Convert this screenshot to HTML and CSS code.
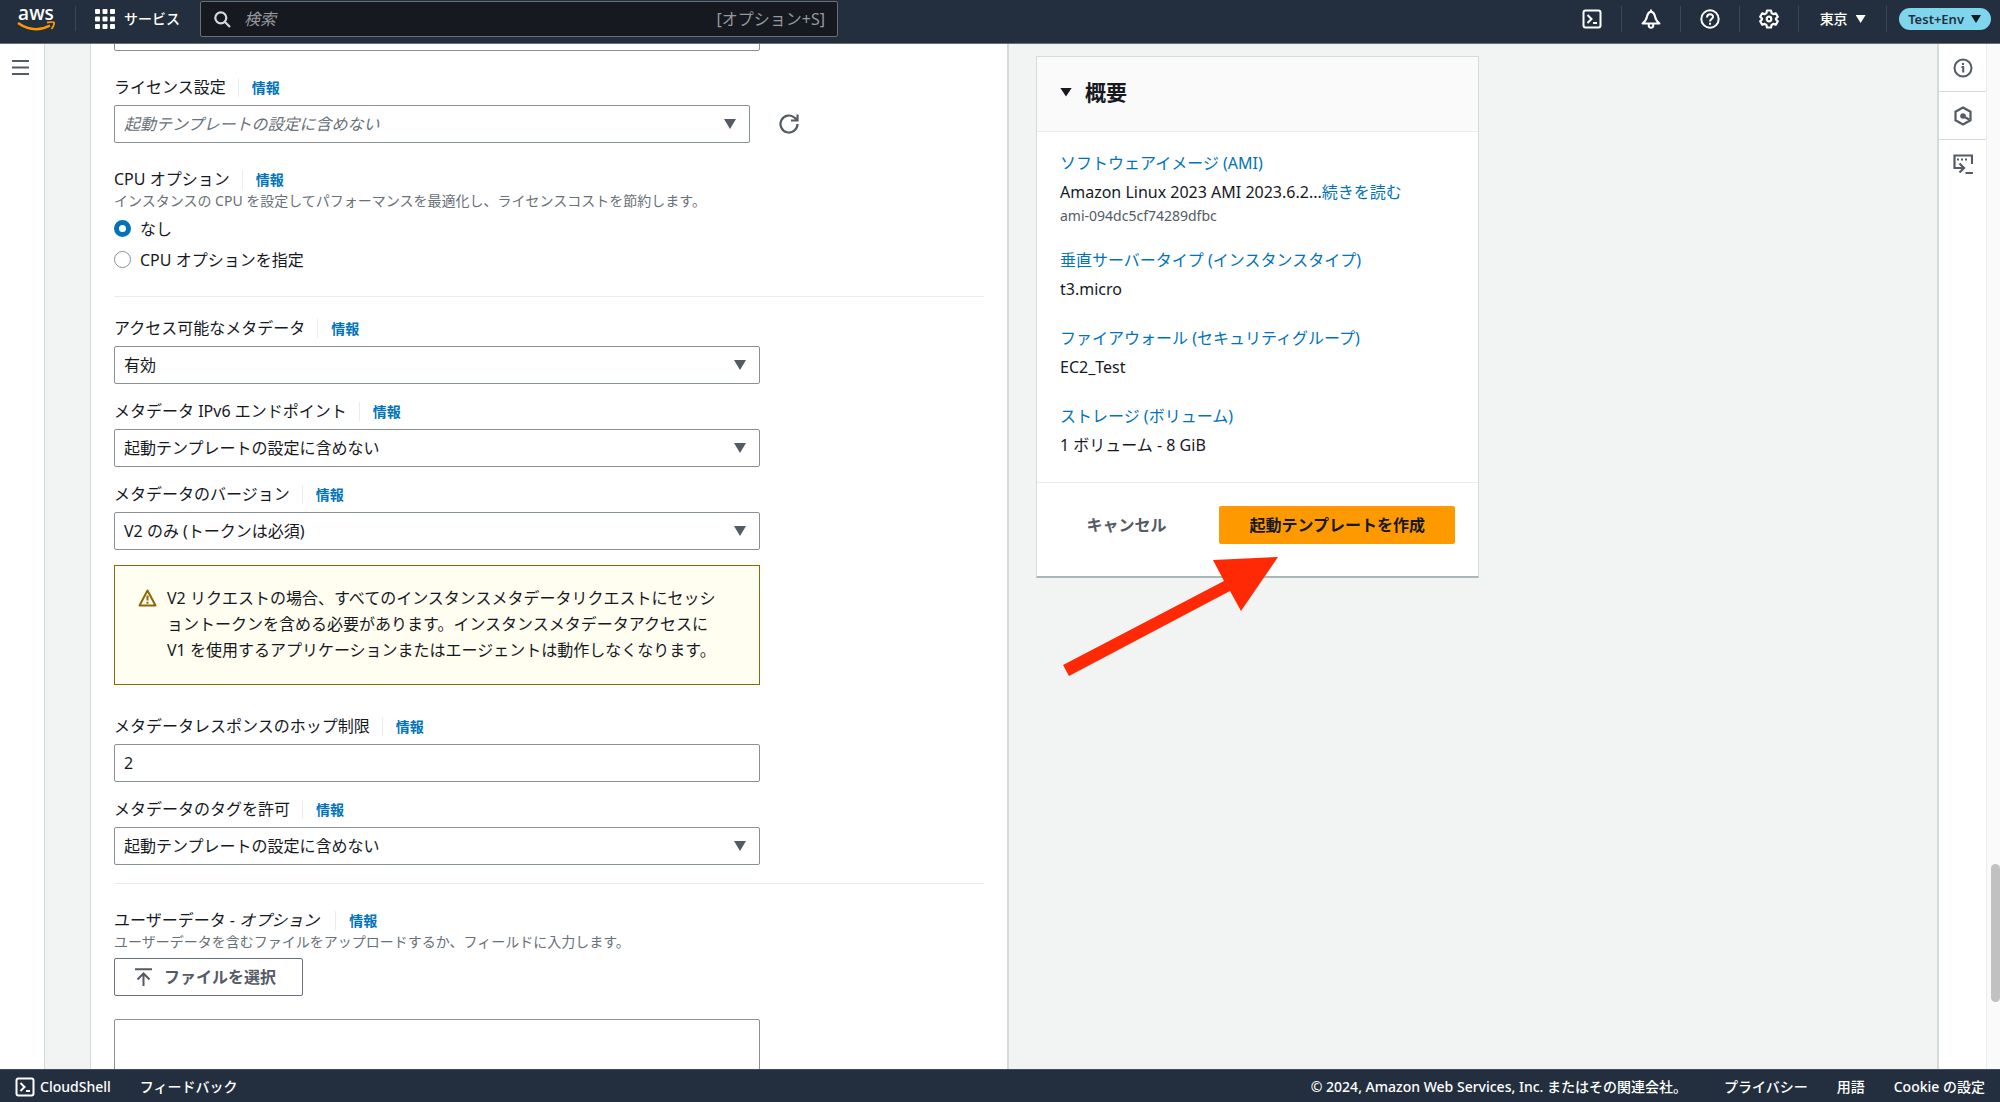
FILE: index.html
```html
<!DOCTYPE html>
<html lang="ja">
<head>
<meta charset="utf-8">
<meta name="viewport" content="width=device-width, initial-scale=1">
<title>起動テンプレートを作成 | EC2</title>
<link rel="stylesheet" href="styles.css">
</head>
<body>
<div class="app">
  <header class="topnav">
    <a class="logo" href="#" aria-label="AWS ホーム">
      <svg width="40" height="36" viewBox="0 0 40 36">
        <text class="logo-text" x="19" y="20" text-anchor="middle">aws</text>
        <path d="M1 23 Q17 34 33 25.500" fill="none" stroke="#ff9900" stroke-width="2.500"/>
        <path d="M30 22.500 Q36 21.500 37 22.500 Q37.500 25 34.500 29" fill="none" stroke="#ff9900" stroke-width="1.800"/>
      </svg>
    </a>
    <button class="services" type="button">
      <svg width="20" height="20" viewBox="0 0 20 20" fill="#fff"><rect x="0" y="0" width="5" height="5" rx="1"/><rect x="7.500" y="0" width="5" height="5" rx="1"/><rect x="15" y="0" width="5" height="5" rx="1"/><rect x="0" y="7.500" width="5" height="5" rx="1"/><rect x="7.500" y="7.500" width="5" height="5" rx="1"/><rect x="15" y="7.500" width="5" height="5" rx="1"/><rect x="0" y="15" width="5" height="5" rx="1"/><rect x="7.500" y="15" width="5" height="5" rx="1"/><rect x="15" y="15" width="5" height="5" rx="1"/></svg>
      <span>サービス</span>
    </button>
    <form class="search">
      <svg width="17" height="17" viewBox="0 0 17 17" fill="none" stroke="#d5dbdb" stroke-width="2.200"><circle cx="6.800" cy="6.800" r="5.500"/><path d="M11 11l5 5"/></svg>
      <input type="search" placeholder="検索" aria-label="検索">
      <span class="shortcut">[オプション+S]</span>
    </form>
    <nav class="tools">
      <button class="tool" type="button" aria-label="CloudShell">
        <svg width="20" height="20" viewBox="0 0 20 20" fill="none" stroke="#fff" stroke-width="2"><rect x="1.500" y="1.500" width="17" height="17" rx="2"/><path d="M5.500 6l4 4-4 4M11 14h4"/></svg>
      </button>
      <button class="tool" type="button" aria-label="通知">
        <svg width="20" height="20" viewBox="0 0 20 20" fill="none" stroke="#fff" stroke-width="2" stroke-linejoin="round"><path d="M10 2.500c-2.500.8-3.600 2.500-4 5C5.500 10.500 4 12.500 1.500 14.500h17c-2.500-2-4-4-4.500-7-.4-2.500-1.500-4.200-4-5zM10 .5v2M7.800 15v2.500q2.200 2.500 4.400 0V15"/></svg>
      </button>
      <button class="tool" type="button" aria-label="ヘルプ">
        <svg width="20" height="20" viewBox="0 0 20 20" fill="none" stroke="#fff" stroke-width="2"><circle cx="10" cy="10" r="8.700"/><path d="M7 8.500C7 4 13.500 4.500 13 8c-.3 2-3 2-3 4.500M10 13.800v2"/></svg>
      </button>
      <button class="tool" type="button" aria-label="設定">
        <svg width="20" height="20" viewBox="0 0 20 20" fill="none" stroke="#fff" stroke-width="2.200" stroke-linejoin="round"><path d="M8 1.500h4l.6 2.600 1.700 1 2.500-.8 2 3.400-1.800 1.800v1l1.800 1.800-2 3.400-2.500-.8-1.700 1-.6 2.600H8l-.6-2.600-1.700-1-2.500.8-2-3.400L3 10.500v-1L1.200 7.700l2-3.400 2.500.8 1.700-1z"/><circle cx="10" cy="10" r="2.300"/></svg>
      </button>
      <button class="tool region" type="button"><span>東京</span><i class="caret"></i></button>
      <button class="account" type="button"><span>Test+Env</span><i class="caret"></i></button>
    </nav>
  </header>

  <div class="body">
    <nav class="rail rail-left">
      <button class="rail-item" type="button" aria-label="メニュー">
        <svg width="17" height="15" viewBox="0 0 17 15" stroke="#545b64" stroke-width="2"><path d="M0 1h17M0 7.500h17M0 14h17"/></svg>
      </button>
    </nav>

    <main class="content">
      <form class="panel">
        <input class="control" type="text" aria-label="前の設定">

        <div class="field field-first">
          <div class="label-row"><label for="license">ライセンス設定</label><a class="info" href="#">情報</a></div>
          <div class="with-action">
            <select id="license" class="control control-empty"><option>起動テンプレートの設定に含めない</option></select>
            <button class="refresh" type="button" aria-label="更新">
              <svg width="20" height="20" viewBox="0 0 20 20" fill="none" stroke="#545b64" stroke-width="2.200"><path d="M18.500 10a8.500 8.500 0 1 1-2.800-6.300L18 6M18.500.5v6H12"/></svg>
            </button>
          </div>
        </div>

        <fieldset class="group">
          <legend class="label-row"><span>CPU オプション</span><a class="info" href="#">情報</a></legend>
          <p class="hint">インスタンスの CPU を設定してパフォーマンスを最適化し、ライセンスコストを節約します。</p>
          <label class="radio"><input type="radio" name="cpu" checked><span>なし</span></label>
          <label class="radio"><input type="radio" name="cpu"><span>CPU オプションを指定</span></label>
        </fieldset>

        <hr>

        <div class="stack">
          <div class="field">
            <div class="label-row"><label for="meta-access">アクセス可能なメタデータ</label><a class="info" href="#">情報</a></div>
            <select id="meta-access" class="control"><option>有効</option></select>
          </div>
          <div class="field">
            <div class="label-row"><label for="meta-ipv6">メタデータ IPv6 エンドポイント</label><a class="info" href="#">情報</a></div>
            <select id="meta-ipv6" class="control"><option>起動テンプレートの設定に含めない</option></select>
          </div>
          <div class="field">
            <div class="label-row"><label for="meta-version">メタデータのバージョン</label><a class="info" href="#">情報</a></div>
            <select id="meta-version" class="control"><option>V2 のみ (トークンは必須)</option></select>
          </div>
          <div class="alert" role="alert">
            <svg width="19" height="18" viewBox="0 0 19 18" fill="none" stroke="#8d6605" stroke-width="2" stroke-linejoin="round"><path d="M9.500 1.500L17.500 16.500H1.500zM9.500 6.500v5M9.500 12.800v2"/></svg>
            <p>V2 リクエストの場合、すべてのインスタンスメタデータリクエストにセッシ<br>ョントークンを含める必要があります。インスタンスメタデータアクセスに<br>V1 を使用するアプリケーションまたはエージェントは動作しなくなります。</p>
          </div>
          <div class="field field-after-alert">
            <div class="label-row"><label for="meta-hop">メタデータレスポンスのホップ制限</label><a class="info" href="#">情報</a></div>
            <input id="meta-hop" class="control" type="text" value="2">
          </div>
          <div class="field">
            <div class="label-row"><label for="meta-tags">メタデータのタグを許可</label><a class="info" href="#">情報</a></div>
            <select id="meta-tags" class="control"><option>起動テンプレートの設定に含めない</option></select>
          </div>
        </div>

        <hr class="hr-user">

        <div class="field">
          <div class="label-row"><label for="user-data">ユーザーデータ - <em>オプション</em></label><a class="info" href="#">情報</a></div>
          <p class="hint">ユーザーデータを含むファイルをアップロードするか、フィールドに入力します。</p>
          <button class="btn btn-file" type="button">
            <svg width="17" height="18" viewBox="0 0 17 18" fill="none" stroke="#545b64" stroke-width="2"><path d="M0 1.200h17M8.500 18V6M2.500 11.500l6-6 6 6"/></svg>
            <span>ファイルを選択</span>
          </button>
          <textarea id="user-data" class="control user-data"></textarea>
        </div>
      </form>

      <aside class="summary">
        <section class="card">
          <h2 class="card-title"><i class="caret"></i>概要</h2>
          <dl class="card-body">
            <div><dt><a href="#">ソフトウェアイメージ (AMI)</a></dt><dd>Amazon Linux 2023 AMI 2023.6.2...<a href="#">続きを読む</a></dd><dd class="ami">ami-094dc5cf74289dfbc</dd></div>
            <div><dt><a href="#">垂直サーバータイプ (インスタンスタイプ)</a></dt><dd>t3.micro</dd></div>
            <div><dt><a href="#">ファイアウォール (セキュリティグループ)</a></dt><dd>EC2_Test</dd></div>
            <div><dt><a href="#">ストレージ (ボリューム)</a></dt><dd>1 ボリューム - 8 GiB</dd></div>
          </dl>
          <div class="card-actions">
            <button class="btn btn-link" type="button">キャンセル</button>
            <button class="btn btn-primary" type="submit">起動テンプレートを作成</button>
          </div>
        </section>
        <svg class="pointer" width="216" height="120" viewBox="0 0 216 120" fill="#ff2a05"><path d="M0 108L161 24L150 3L215 0L178 54L167 34L6 119z"/></svg>
      </aside>
    </main>

    <nav class="rail rail-right">
      <button class="rail-item" type="button" aria-label="情報">
        <svg width="20" height="20" viewBox="0 0 20 20" fill="none" stroke="#545b64" stroke-width="2"><circle cx="10" cy="10" r="8.500"/><path d="M8.500 9h1.700v5.500M10 5v2"/></svg>
      </button>
      <button class="rail-item" type="button" aria-label="サービス状態">
        <svg width="18" height="20" viewBox="0 0 18 20" fill="none" stroke="#545b64" stroke-width="2.200"><path d="M9 1.500l7.500 4.200v8.600L9 18.500l-7.500-4.200V5.700zM9 10l6 3.500"/><circle cx="9" cy="10" r="2.800" fill="#545b64" stroke="none"/></svg>
      </button>
      <button class="rail-item" type="button" aria-label="コマンド">
        <svg width="20" height="20" viewBox="0 0 20 20" fill="none" stroke="#545b64" stroke-width="2.200"><path d="M19 10V1.500H1.500V14H10M6.500 9.500l4.500 4.500-4.500 4.500M12.500 19H20"/><path d="M4 5.500h10" stroke-dasharray="2 2"/></svg>
      </button>
    </nav>
    <div class="scroll-track"><div class="scroll-thumb"></div></div>
  </div>

  <footer class="footer">
    <a class="cloudshell" href="#">
      <svg width="20" height="20" viewBox="0 0 20 20" fill="none" stroke="#fff" stroke-width="2"><rect x="1.500" y="1.500" width="17" height="17" rx="2"/><path d="M5.500 6l4 4-4 4M11 14h4"/></svg>
      <span>CloudShell</span>
    </a>
    <a href="#">フィードバック</a>
    <span class="copyright">© 2024, Amazon Web Services, Inc. またはその関連会社。</span>
    <a href="#">プライバシー</a>
    <a href="#">用語</a>
    <a href="#">Cookie の設定</a>
  </footer>
</div>
</body>
</html>
```
FILE: styles.css
```css
* { box-sizing: border-box; }

body {
  margin: 0;
  color: #16191f;
  font: 16px/24px "Noto Sans", "Noto Sans CJK JP", sans-serif;
}

button, input, select, textarea { font: inherit; color: inherit; }
button { padding: 0; border: 0; background: none; cursor: pointer; }
a { color: #0073bb; text-decoration: none; }
p, dl, dd, h2, fieldset, legend { margin: 0; padding: 0; border: 0; }
svg { display: block; flex: none; }

.app {
  display: grid;
  grid-template-rows: auto 1fr auto;
  height: 100vh;
  overflow: hidden;
}

.caret {
  flex: none;
  width: 12px;
  height: 9px;
  background: currentColor;
  clip-path: polygon(0 0, 100% 0, 50% 100%);
}

/* Top navigation */
.topnav {
  display: flex;
  align-items: flex-start;
  height: 44px;
  padding-right: 9px;
  border-bottom: 1px solid #687078;
  background: #232f3e;
  color: #fff;
  font-size: 14px;
}
.logo {
  width: 76px;
  height: 36px;
  padding-left: 17px;
  background: linear-gradient(#3b4655, #3b4655) no-repeat right bottom 5px / 1px 25px;
}
.logo-text { fill: #fff; font: 600 19px "Open Sans", sans-serif; }
.services { display: flex; align-items: center; gap: 9px; height: 38px; padding: 0 20px 0 19px; font-weight: 500; }
.search {
  display: flex;
  align-items: center;
  flex: 0 1 638px;
  height: 36px;
  margin-top: 1px;
  padding: 0 12px 0 13px;
  border: 1px solid #687078;
  border-radius: 2px;
  background: #16191f;
  color: #95999e;
  font-size: 16px;
}
.search input { flex: 1; min-width: 0; padding: 0 13px; border: 0; outline: 0; background: none; }
.search input::placeholder { color: #95999e; font-style: italic; opacity: 1; }
.tools { display: flex; align-items: center; height: 38px; margin-left: auto; }
.tool { display: flex; align-items: center; justify-content: center; width: 59px; height: 26px; border-right: 1px solid #414750; }
.region { gap: 8px; width: 88px; font-weight: 500; }
.region .caret, .account .caret { width: 10px; height: 8px; }
.account {
  display: flex;
  align-items: center;
  gap: 7px;
  height: 22px;
  margin-left: 12px;
  padding: 0 10px 0 9px;
  border-radius: 11px;
  background: #7fd6ec;
  color: #232f3e;
  font-size: 13px;
  font-weight: 600;
}
.account .caret { color: #16191f; }

/* Page frame */
.body { display: flex; min-height: 0; }
.rail { flex: none; background: #fff; }
.rail-left { width: 45px; border-right: 1px solid #d5dbdb; }
.rail-right { width: 50px; border-left: 2px solid #d5dbdb; border-right: 1px solid #eaeded; }
.rail-item { display: flex; align-items: center; justify-content: center; width: 100%; height: 48px; }
.rail-left .rail-item { height: 46px; padding-right: 4px; }
.rail-right .rail-item:not(:last-child) { border-bottom: 1px solid #d5dbdb; }
.scroll-track { position: relative; flex: none; width: 13px; background: #fafafa; }
.scroll-thumb { position: absolute; top: 80%; right: 0; width: 9px; height: 138px; border-radius: 5px; background: #c1c1c1; }

.content {
  display: flex;
  align-items: flex-start;
  flex: 1;
  gap: 27px;
  min-width: 0;
  padding-left: 45px;
  overflow: hidden;
  background: #f2f3f3;
}

/* Form panel, scrolled so that the first control is partly hidden */
.panel {
  flex: 0 1 919px;
  min-width: 0;
  margin-top: -31px;
  padding: 0 23px;
  border: solid #d5dbdb;
  border-width: 0 2px 0 1px;
  background: #fff;
}
.control {
  display: block;
  width: 100%;
  max-width: 646px;
  height: 38px;
  padding: 0 9px;
  border: 1px solid #879196;
  border-radius: 2px;
  outline: 0;
  background: #fff;
}
select.control {
  appearance: none;
  background: #fff url("data:image/svg+xml,%3Csvg xmlns='http://www.w3.org/2000/svg' width='12' height='10'%3E%3Cpath d='M0 0h12L6 10z' fill='%23545b64'/%3E%3C/svg%3E") no-repeat right 13px center;
}
select.control-empty { color: #687078; font-style: italic; }
.label-row { display: flex; align-items: center; height: 24px; }
.label-row em { margin-right: 4px; }
.info {
  margin-left: 12px;
  padding-left: 13px;
  border-left: 1px solid #eaeded;
  font-size: 14px;
  line-height: 19px;
  font-weight: 700;
}
.label-row + .control, .with-action { margin-top: 6px; }
.field-first { margin-top: 24px; }
.with-action { display: flex; align-items: center; gap: 29px; }
.with-action .control { flex: 0 1 636px; }
.group { margin-top: 24px; min-width: 0; }
.hint { color: #687078; font-size: 14px; line-height: 20px; }
.radio { display: flex; align-items: center; gap: 9px; margin-top: 6px; height: 25px; }
.hint + .radio { margin-top: 5px; }
.radio input {
  appearance: none;
  flex: none;
  width: 17px;
  height: 17px;
  margin: 0;
  border: 1px solid #879196;
  border-radius: 50%;
  background: #fff;
}
.radio input:checked { border: 5px solid #0073bb; }
hr { height: 1px; margin: 24px 0 19px; border: 0; background: #eaeded; }
.hr-user { margin: 18px 0 24px; }
.stack { display: flex; flex-direction: column; gap: 15px; max-width: 646px; }
.field-after-alert { margin-top: 14px; }
.alert {
  display: flex;
  gap: 10px;
  padding: 19px 16px 21px 23px;
  border: 1px solid #8d6605;
  background: #fffef0;
  line-height: 26px;
}
.alert svg { margin-top: 4px; }
.user-data { height: 200px; margin-top: 23px; resize: none; }

/* Buttons */
.btn { height: 38px; border-radius: 2px; color: #545b64; font-weight: 700; }
.btn-file { display: flex; align-items: center; gap: 12px; margin-top: 6px; padding: 0 26px 0 20px; border: 1px solid #687078; }
.btn-primary { padding: 0 30px; background: #ff9900; color: #16191f; }
.btn-link { padding: 0 24px; }

/* Summary */
.summary { position: relative; flex: 0 1 443px; margin-top: 12px; }
.card {
  border: 1px solid #d5dbdb;
  border-bottom: 2px solid #aab7b8;
  background: #fff;
}
.card-title {
  display: flex;
  align-items: center;
  gap: 13px;
  height: 75px;
  padding: 0 23px 4px;
  border-bottom: 1px solid #eaeded;
  background: #fafafa;
  font-size: 21px;
  line-height: 28px;
}
.card-body { display: flex; flex-direction: column; gap: 20px; padding: 16px 23px 23px; }
.card-body dt { line-height: 30px; }
.card-body dd { line-height: 28px; }
.card-body .ami { color: #545b64; font-size: 14px; line-height: 19px; }
.card-actions {
  display: flex;
  justify-content: flex-end;
  gap: 29px;
  padding: 23px 23px 32px;
  border-top: 1px solid #eaeded;
}
.pointer { position: absolute; top: 501px; left: 27px; }

/* Footer */
.footer {
  display: flex;
  align-items: center;
  gap: 29px;
  height: 33px;
  padding: 1px 15px 0;
  border-top: 1px solid #414d5c;
  background: #232f3e;
  color: #fff;
  font-size: 14px;
  font-weight: 500;
}
.footer a { color: inherit; }
.cloudshell { display: flex; align-items: center; gap: 5px; }
.copyright { margin-left: auto; margin-right: 8px; }
```
